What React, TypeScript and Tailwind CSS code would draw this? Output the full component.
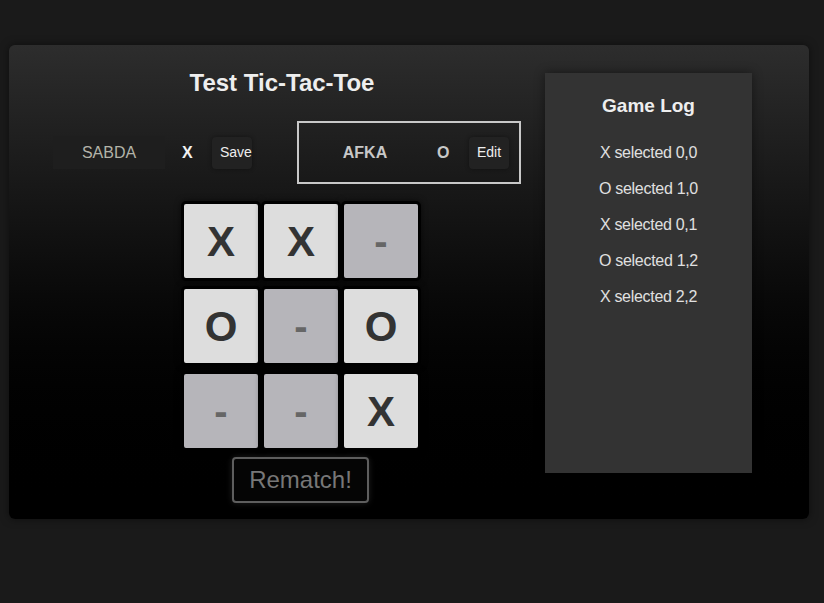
import React from "react";

const board = [
  ["X", "X", "-"],
  ["O", "-", "O"],
  ["-", "-", "X"],
];

const log = [
  "X selected 0,0",
  "O selected 1,0",
  "X selected 0,1",
  "O selected 1,2",
  "X selected 2,2",
];

export default function App() {
  return (
    <div
      className="w-[824px] h-[603px] bg-[#1a1a1a] pt-[45px] pl-[9px] overflow-hidden"
      style={{ fontFamily: '"Liberation Sans", Arial, sans-serif' }}
    >
      <div className="w-[800px] h-[474px] rounded-[6px] bg-gradient-to-b from-[#2d2d2d] to-[#000000] shadow-[0_0_8px_rgba(0,0,0,0.5)] flex">
        {/* left column */}
        <div className="w-[536px] pl-[44px]">
          <div className="w-[468px]">
            <h1 className="mt-[25px] h-[25px] leading-[25px] text-[24px] font-bold text-[#eeeeee] text-center pr-[10px]">
              Test Tic-Tac-Toe
            </h1>
            <div className="mt-[26px] h-[63px] flex items-center">
              <div className="w-[112px] h-[33px] bg-[#1e1e1e] text-[#b3b3a8] text-[16px] flex items-center justify-center">
                SABDA
              </div>
              <span className="ml-[17px] w-[11px] text-[16px] font-bold text-[#f2f2f2]">X</span>
              <button className="ml-[19px] w-[40px] h-[32px] bg-[#222222] rounded-[4px] text-[14px] text-[#eeeeee] pl-[8px] text-left whitespace-nowrap shadow-[0_0_4px_rgba(0,0,0,0.4)]">
                Save
              </button>
              <div className="ml-[45px] h-[63px] flex items-center border-2 border-[#c8c8c8] px-[10px]">
                <span className="w-[112px] text-center text-[16px] font-bold text-[#c8c8c8]">AFKA</span>
                <span className="ml-[16px] w-[12px] text-[16px] font-bold text-[#c8c8c8]">O</span>
                <button className="ml-[20px] w-[40px] h-[32px] bg-[#222222] rounded-[4px] text-[14px] text-[#eeeeee] shadow-[0_0_4px_rgba(0,0,0,0.4)]">
                  Edit
                </button>
              </div>
            </div>
            <div className="mt-[17px] ml-[128px] grid grid-cols-[80px_80px_80px] gap-y-[5px] w-[240px]">
              {board.flat().map((v, i) => (
                <div
                  key={i}
                  className={
                    "h-[80px] border-[3px] border-black rounded-[5px] flex items-center justify-center font-bold shadow-[0_0_6px_rgba(0,0,0,0.6)] " +
                    (v === "-"
                      ? "bg-[#b6b5ba] text-[#666666] text-[40px]"
                      : "bg-[#dddddd] text-[#333333] text-[42px]")
                  }
                >
                  {v}
                </div>
              ))}
            </div>
            <button className="mt-[6px] ml-[179px] w-[137px] h-[46px] border-2 border-[#5e5e5e] rounded-[4px] bg-[#050505] text-[24px] text-[#777777] flex items-center justify-center shadow-[0_0_6px_rgba(255,255,255,0.12)]">
              Rematch!
            </button>
          </div>
        </div>
        {/* log panel */}
        <div className="mt-[28px] w-[207px] h-[400px] bg-[#333333] shadow-[0_0_10px_rgba(0,0,0,0.45)] flex flex-col items-center">
          <h2 className="mt-[22px] h-[22px] leading-[22px] text-[19px] font-bold text-[#eeeeee]">Game Log</h2>
          <div className="mt-[27px] flex flex-col gap-[18px]">
            {log.map((l, i) => (
              <div key={i} className="h-[18px] leading-[18px] text-[16px] tracking-[-0.3px] text-[#e0e0e0] text-center">
                {l}
              </div>
            ))}
          </div>
        </div>
      </div>
    </div>
  );
}
